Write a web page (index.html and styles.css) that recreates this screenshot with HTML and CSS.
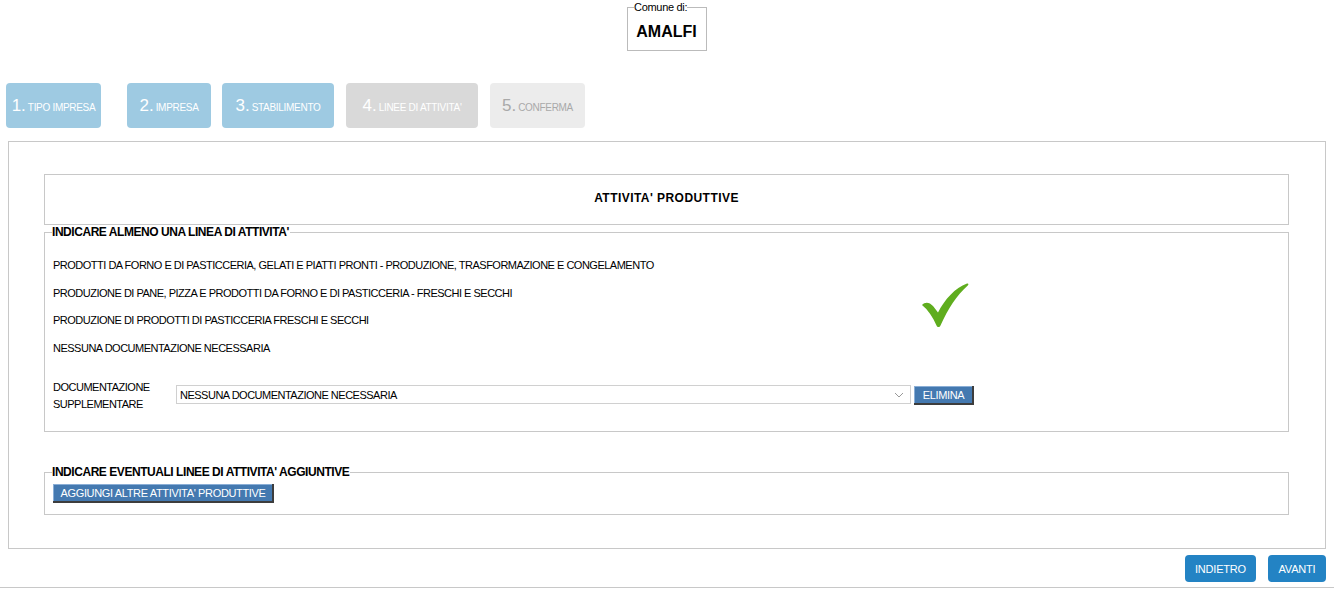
FILE: index.html
```html
<!DOCTYPE html>
<html lang="it">
<head>
<meta charset="utf-8">
<title>Linee di attività</title>
<link rel="stylesheet" href="styles.css">
</head>
<body>
<header class="top">
  <fieldset class="comune">
    <legend>Comune di:</legend>
    <div class="comune-name">AMALFI</div>
  </fieldset>
</header>

<nav class="steps">
  <div class="step done"><span class="num">1.</span>TIPO IMPRESA</div>
  <div class="step done"><span class="num">2.</span>IMPRESA</div>
  <div class="step done"><span class="num">3.</span>STABILIMENTO</div>
  <div class="step current"><span class="num">4.</span>LINEE DI ATTIVITA'</div>
  <div class="step todo"><span class="num">5.</span>CONFERMA</div>
</nav>

<main class="panel">
  <div class="title-box">ATTIVITA' PRODUTTIVE</div>

  <fieldset class="group group-main">
    <legend>INDICARE ALMENO UNA LINEA DI ATTIVITA'</legend>
    <p class="line">PRODOTTI DA FORNO E DI PASTICCERIA, GELATI E PIATTI PRONTI - PRODUZIONE, TRASFORMAZIONE E CONGELAMENTO</p>
    <p class="line">PRODUZIONE DI PANE, PIZZA E PRODOTTI DA FORNO E DI PASTICCERIA - FRESCHI E SECCHI</p>
    <p class="line">PRODUZIONE DI PRODOTTI DI PASTICCERIA FRESCHI E SECCHI</p>
    <p class="line">NESSUNA DOCUMENTAZIONE NECESSARIA</p>
    <svg class="check" width="48" height="47" viewBox="0 0 48 47">
      <path d="M1 23 C4 19.5 8.5 20 12 24 L17 30.5 C24 17 34 6 46 1.5 C47.5 1 48 2.5 46.5 3.8 C36 13 27 27 19.5 43.5 C18.5 45.5 16.5 45.5 15.5 43.5 C12 35 7 28 1 23 Z" fill="#5fad1e"/>
    </svg>
    <div class="doc-row">
      <label class="doc-label">DOCUMENTAZIONE<br>SUPPLEMENTARE</label>
      <div class="select">
        <span>NESSUNA DOCUMENTAZIONE NECESSARIA</span>
        <svg width="10" height="6" viewBox="0 0 10 6"><path d="M1 1 L5 5 L9 1" fill="none" stroke="#999" stroke-width="1"/></svg>
      </div>
      <button class="btn-old btn-del">ELIMINA</button>
    </div>
  </fieldset>

  <fieldset class="group group-extra">
    <legend>INDICARE EVENTUALI LINEE DI ATTIVITA' AGGIUNTIVE</legend>
    <button class="btn-old btn-add">AGGIUNGI ALTRE ATTIVITA' PRODUTTIVE</button>
  </fieldset>
</main>

<footer class="nav">
  <button class="btn-nav btn-back">INDIETRO</button>
  <button class="btn-nav btn-next">AVANTI</button>
</footer>
</body>
</html>
```
FILE: styles.css
```css
* { box-sizing: border-box; }
html, body { margin: 0; padding: 0; }
body {
  font-family: "Liberation Sans", Arial, sans-serif;
  font-size: 11px;
  letter-spacing: -0.5px;
  color: #000;
  background: #fff;
  width: 1334px;
  height: 589px;
  overflow: hidden;
}

.top {
  display: flex;
  justify-content: center;
  padding-top: 2px;
}
.comune {
  margin: 0;
  border: 1px solid #bbb;
  padding: 3px 7px 6px 6px;
  width: 80px;
  height: 49px;
  letter-spacing: 0;
}
.comune legend {
  padding: 0;
  font-size: 11px;
  line-height: 11px;
  letter-spacing: -0.3px;
}
.comune-name {
  font-weight: bold;
  font-size: 16px;
  text-align: center;
  line-height: 20px;
  margin-top: 6px;
}

.steps {
  display: flex;
  margin-top: 32px;
  padding-left: 6px;
  height: 45px;
}
.step {
  height: 45px;
  border-radius: 4px;
  display: flex;
  align-items: center;
  justify-content: center;
  color: #fff;
  font-size: 10px;
  letter-spacing: -0.3px;
  padding-top: 3px;
  white-space: nowrap;
}
.step .num {
  font-size: 17px;
  margin-right: 2px;
  letter-spacing: 0;
  position: relative;
  top: -1px;
}
.step.done { background: #9ecae2; }
.step.current { background: #d9d9d9; }
.step.todo { background: #ececec; color: #a9a9a9; }
.step:nth-child(1) { width: 95px; margin-right: 26px; }
.step:nth-child(2) { width: 84px; margin-right: 11px; }
.step:nth-child(3) { width: 112px; margin-right: 12px; }
.step:nth-child(4) { width: 132px; margin-right: 12px; }
.step:nth-child(5) { width: 95px; }

.panel {
  margin: 13px 0 0 8px;
  width: 1318px;
  height: 408px;
  border: 1px solid #c8c8c8;
  padding: 32px 36px 0 35px;
}

.title-box {
  border: 1px solid #c8c8c8;
  height: 51px;
  display: flex;
  align-items: center;
  justify-content: center;
  font-weight: bold;
  font-size: 12px;
  letter-spacing: 0.45px;
  padding-bottom: 3px;
}

.group {
  border: 1px solid #c8c8c8;
  margin: 0;
  padding: 0 8px;
  min-width: 0;
  position: relative;
}
.group legend {
  font-weight: bold;
  font-size: 12px;
  padding: 0 1px 0 0;
  margin-left: -1px;
  line-height: 13px;
  letter-spacing: -0.45px;
}
.group-main {
  margin-top: 1px;
  height: 206px;
  padding-top: 19px;
}
.line {
  margin: 0;
  height: 27.5px;
  line-height: 14px;
}
.check {
  position: absolute;
  left: 876px;
  top: 43px;
}
.doc-row {
  display: flex;
  align-items: flex-start;
  margin-top: 17px;
}
.doc-label {
  width: 123px;
  line-height: 17px;
  margin-top: -6px;
}
.select {
  width: 735px;
  height: 19px;
  border: 1px solid #d0d0d0;
  display: flex;
  align-items: center;
  justify-content: space-between;
  padding: 0 6px 0 3px;
  line-height: 14px;
}
.select svg { margin-top: 1px; }
.btn-old {
  font-family: inherit;
  font-size: 11px;
  letter-spacing: -0.35px;
  color: #fff;
  background: #4479b0;
  border: 0;
  border-right: 2px solid #3d3d3d;
  border-bottom: 2px solid #3d3d3d;
  box-shadow: inset 1px 1px 0 #8aaed6;
  padding: 0 4px 0 5px;
  height: 19px;
  margin: 1px 0 0 3px;
  white-space: nowrap;
  cursor: pointer;
}
.btn-del { width: 60px; }
.group-extra {
  margin-top: 34px;
  height: 49px;
  padding-top: 5px;
}
.btn-add {
  margin: 0;
  width: 221px;
  text-align: center;
}

.nav {
  display: flex;
  justify-content: flex-end;
  gap: 12px;
  padding-right: 8px;
  margin-top: 6px;
  height: 33px;
  border-bottom: 1px solid #c8c8c8;
  width: 1334px;
}
.btn-nav {
  font-family: inherit;
  font-size: 11px;
  letter-spacing: -0.2px;
  color: #fff;
  background: #2383c4;
  border: 0;
  border-radius: 4px;
  height: 27px;
  padding: 0;
  cursor: pointer;
}
.btn-back { width: 71px; }
.btn-next { width: 58px; }
```
